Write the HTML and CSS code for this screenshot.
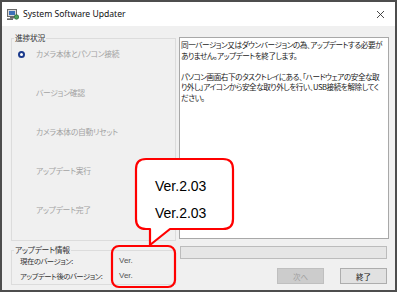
FILE: index.html
```html
<!DOCTYPE html>
<html lang="ja">
<head>
  <meta charset="UTF-8" />
  <meta name="viewport" content="width=device-width, initial-scale=1.0" />
  <title>System Software Updater</title>
  <link rel="stylesheet" href="styles.css">
</head>
<body>
  <div class="window">
    <div class="titlebar">
      <svg class="app-icon" width="12" height="11" viewBox="0 0 12 11">
        <rect x="0.5" y="0.5" width="9" height="7" fill="#d8d8d8" stroke="#6a6a6a"/>
        <rect x="2" y="2" width="6" height="4" fill="#3c6fb6"/>
        <rect x="3" y="8" width="4" height="1.5" fill="#6a6a6a"/>
        <circle cx="9.5" cy="8" r="2.2" fill="#4aa05a" stroke="#2d6b38" stroke-width="0.8"/>
        <rect x="0" y="9.5" width="6" height="1.3" fill="#444"/>
      </svg>
      <span class="title">System Software Updater</span>
      <svg class="close" width="9" height="9" viewBox="0 0 9 9">
        <path d="M1 1 L8 8 M8 1 L1 8" stroke="#333" stroke-width="0.9" fill="none"/>
      </svg>
    </div>

    <div class="content">
      <div class="main">
        <fieldset class="group steps-group">
          <legend>進捗状況</legend>
          <ul class="steps">
            <li class="step current"><span class="bullet"></span>カメラ本体とパソコン接続</li>
            <li class="step"><span class="bullet"></span>バージョン確認</li>
            <li class="step"><span class="bullet"></span>カメラ本体の自動リセット</li>
            <li class="step"><span class="bullet"></span>アップデート実行</li>
            <li class="step"><span class="bullet"></span>アップデート完了</li>
          </ul>
        </fieldset>
        <div class="message">
          同一バージョン又はダウンバージョンの為、アップデートする必要が<br>
          ありません。アップデートを終了します。<br>
          <br>
          パソコン画面右下のタスクトレイにある、「ハードウェアの安全な取<br>
          り外し」アイコンから安全な取り外しを行い、USB接続を解除してく<br>
          ださい。
        </div>
      </div>

      <div class="footer">
        <fieldset class="group info-group">
          <legend>アップデート情報</legend>
          <div class="info-rows">
            <div class="info-row"><span class="label">現在のバージョン:</span><span class="value">Ver.</span></div>
            <div class="info-row"><span class="label">アップデート後のバージョン:</span><span class="value">Ver.</span></div>
          </div>
        </fieldset>
        <div class="actions">
          <div class="progress"></div>
          <div class="buttons">
            <button disabled>次へ</button>
            <button>終了</button>
          </div>
        </div>
      </div>
    </div>
  </div>

  <svg class="callouts" width="400" height="296" viewBox="0 0 400 296">
    <path d="M146 159 H223 Q233 159 233 169 V219 Q233 229 223 229 H170 L150 245 V229 H146 Q136 229 136 219 V169 Q136 159 146 159 Z"
          fill="#fff" stroke="#f00" stroke-width="2.2" stroke-linejoin="round"/>
    <text x="155" y="191" class="callout-text">Ver.2.03</text>
    <text x="155" y="218" class="callout-text">Ver.2.03</text>
    <rect x="112" y="246" width="63" height="41" rx="7" fill="none" stroke="#f00" stroke-width="2.2"/>
  </svg>
</body>
</html>
```

FILE: styles.css
```css
body {
  margin: 0;
  background: #fff;
  font-family: "Noto Sans CJK JP", "Noto Sans", sans-serif;
  font-feature-settings: "palt";
}
.window {
  width: 397px;
  height: 292px;
  box-sizing: border-box;
  border: 2px solid #4d4d4d;
  display: flex;
  flex-direction: column;
  background: #f0f0f0;
}
.titlebar {
  height: 24px;
  background: #fff;
  display: flex;
  align-items: center;
  padding: 0 8px 0 5px;
}
.app-icon {
  margin-right: 4px;
}
.title {
  font-family: "Noto Sans", sans-serif;
  font-size: 8.6px;
  color: #111;
  flex: 1;
}
.close {
  margin-right: 2px;
}
.content {
  flex: 1;
  padding: 7px 6px 5px 9px;
  display: flex;
  flex-direction: column;
  gap: 4px;
}
.main {
  display: grid;
  grid-template-columns: 165px 210px;
  gap: 3px;
  height: 208px;
}
.group {
  margin: 0;
  padding: 0;
  border: 1px solid #dcdcdc;
  min-width: 0;
}
.group legend {
  margin-left: 2px;
  padding: 0 1px;
  font-size: 7.8px;
  line-height: 10px;
  letter-spacing: -0.3px;
  color: #333;
}
.steps {
  list-style: none;
  margin: 0;
  padding: 6px 0 0 6px;
  display: flex;
  flex-direction: column;
  gap: 29px;
}
.step {
  display: flex;
  align-items: center;
  font-size: 7.8px;
  line-height: 10px;
  letter-spacing: -0.3px;
  color: #a3a3a3;
}
.bullet {
  width: 7px;
  height: 7px;
  margin-right: 11px;
  box-sizing: border-box;
  border-radius: 50%;
}
.step.current .bullet {
  border: 2px solid #1b3a8c;
  background: #fff;
}
.message {
  margin-top: 4px;
  height: 202px;
  box-sizing: border-box;
  background: #fff;
  border: 1px solid #a8a8a8;
  padding: 2px 1px;
  font-size: 7.6px;
  line-height: 10.5px;
  letter-spacing: -0.45px;
  color: #1a1a1a;
  white-space: nowrap;
  overflow: hidden;
}
.footer {
  display: grid;
  grid-template-columns: 165px 210px;
  gap: 3px;
  height: 40px;
}
.info-rows {
  padding: 1px 0 0 8px;
  display: flex;
  flex-direction: column;
  gap: 5px;
}
.info-row {
  display: flex;
  font-size: 7.4px;
  line-height: 10px;
  letter-spacing: -0.5px;
  color: #333;
  white-space: nowrap;
}
.info-row .label {
  width: 99px;
}
.info-row .value {
  font-family: "Liberation Sans", sans-serif;
  font-size: 8px;
  letter-spacing: 0;
  color: #555;
}
.actions {
  display: flex;
  flex-direction: column;
  padding: 1px 2px 0 1px;
}
.progress {
  height: 13px;
  box-sizing: border-box;
  background: #e6e6e6;
  border: 1px solid #bcbcbc;
}
.buttons {
  margin-top: 9px;
  display: flex;
  justify-content: flex-end;
  gap: 16px;
}
.buttons button {
  width: 47px;
  height: 16px;
  padding: 0;
  font-family: inherit;
  font-size: 7.5px;
  background: #e1e1e1;
  border: 1px solid #adadad;
  color: #111;
}
.buttons button:disabled {
  background: #cccccc;
  border-color: #bfbfbf;
  color: #a0a0a0;
}
.callouts {
  position: absolute;
  left: 0;
  top: 0;
  pointer-events: none;
}
.callout-text {
  font-family: "Liberation Sans", Arial, sans-serif;
  font-size: 14px;
  fill: #000;
}
```
